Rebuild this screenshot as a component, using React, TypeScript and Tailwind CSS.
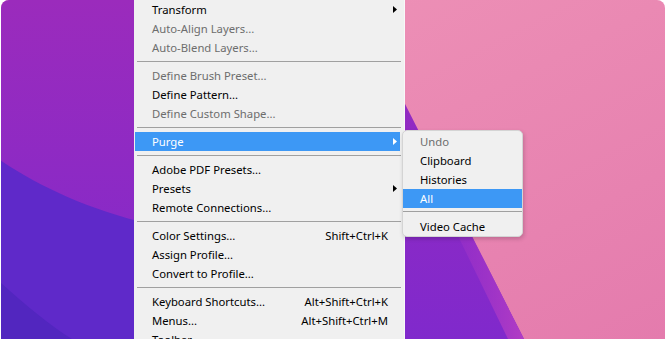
import React from 'react';

type Item =
  | { sep: true }
  | { label: string; disabled?: boolean; shortcut?: string; sub?: boolean; active?: boolean };

const mainItems: Item[] = [
  { label: 'Transform', sub: true },
  { label: 'Auto-Align Layers...', disabled: true },
  { label: 'Auto-Blend Layers...', disabled: true },
  { sep: true },
  { label: 'Define Brush Preset...', disabled: true },
  { label: 'Define Pattern...' },
  { label: 'Define Custom Shape...', disabled: true },
  { sep: true },
  { label: 'Purge', sub: true, active: true },
  { sep: true },
  { label: 'Adobe PDF Presets...' },
  { label: 'Presets', sub: true },
  { label: 'Remote Connections...' },
  { sep: true },
  { label: 'Color Settings...', shortcut: 'Shift+Ctrl+K' },
  { label: 'Assign Profile...' },
  { label: 'Convert to Profile...' },
  { sep: true },
  { label: 'Keyboard Shortcuts...', shortcut: 'Alt+Shift+Ctrl+K' },
  { label: 'Menus...', shortcut: 'Alt+Shift+Ctrl+M' },
  { label: 'Toolbar...' },
];

const purgeItems: Item[] = [
  { label: 'Undo', disabled: true },
  { label: 'Clipboard' },
  { label: 'Histories' },
  { label: 'All', active: true },
  { sep: true },
  { label: 'Video Cache' },
];

function Arrow({ white }: { white?: boolean }) {
  return (
    <svg width="4" height="7" viewBox="0 0 4 7" className="absolute right-[3px] top-[6px]">
      <polygon points="0,0 4,3.5 0,7" fill={white ? '#ffffff' : '#000000'} />
    </svg>
  );
}

function Row({ item }: { item: Exclude<Item, { sep: true }> }) {
  const color = item.active ? 'text-white' : item.disabled ? 'text-[#6d6d6d]' : 'text-black';
  return (
    <div
      className={`relative h-[19px] flex items-center justify-between pl-[17px] pr-[12px] ${color} ${
        item.active ? 'bg-[#3d98f5]' : ''
      }`}
    >
      <span>{item.label}</span>
      {item.shortcut && <span>{item.shortcut}</span>}
      {item.sub && <Arrow white={item.active} />}
    </div>
  );
}

function Wallpaper() {
  return (
    <svg width="667" height="339" viewBox="0 0 667 339" className="absolute inset-0">
      <defs>
        <clipPath id="screen">
          <rect x="1" y="0" width="664" height="360" rx="8" />
        </clipPath>
        <linearGradient id="pink" x1="0" y1="0" x2="1" y2="1">
          <stop offset="0" stopColor="#f097b9" />
          <stop offset="1" stopColor="#e47bad" />
        </linearGradient>
        <linearGradient id="violet" x1="0" y1="0" x2="0" y2="1">
          <stop offset="0" stopColor="#9b2bbc" />
          <stop offset="1" stopColor="#8029cc" />
        </linearGradient>
        <linearGradient id="band" x1="0" y1="0" x2="1" y2="0">
          <stop offset="0" stopColor="#8a2acb" stopOpacity="0" />
          <stop offset="1" stopColor="#b23cc4" />
        </linearGradient>
      </defs>
      <rect width="667" height="339" fill="#ffffff" />
      <g clipPath="url(#screen)">
        <rect width="667" height="339" fill="url(#pink)" />
        <path d="M0 0 H396 L403 100 L524 339 H0 Z" fill="url(#violet)" />
        <path d="M403 100 L524 339 H508 L398 112 Z" fill="url(#band)" />
        <path d="M0 160 C40 187 90 210 150 224 L150 339 H0 Z" fill="#5f29c9" />
        <path d="M0 282 C25 305 50 325 72 339 H0 Z" fill="#5226bf" />
      </g>
    </svg>
  );
}

export default function App() {
  return (
    <div
      className="relative w-[667px] h-[339px] overflow-hidden text-[11.3px] leading-none"
      style={{ fontFamily: '"Noto Sans", "Open Sans", sans-serif' }}
    >
      <Wallpaper />

      {/* main Edit menu */}
      <div className="absolute left-[134px] top-0 w-[271px] h-[360px] bg-[#f0f0f0] pl-[1px] pr-[4px] border-r border-[#f8f8f8]">
        {mainItems.map((it, i) =>
          'sep' in it ? (
            <div key={i} className="h-[9px] pt-[4px] ml-[2px] mr-[-1px]">
              <div className="h-px bg-[#a0a0a0]" />
            </div>
          ) : (
            <Row key={i} item={it} />
          )
        )}
      </div>

      {/* Purge submenu */}
      <div className="absolute left-[402px] top-[130px] w-[121px] bg-[#f0f0f0] border border-[#d4d4d4] rounded-[5px] pt-px overflow-hidden shadow-[1px_2px_4px_rgba(0,0,0,0.18)]">
        {purgeItems.map((it, i) =>
          'sep' in it ? (
            <div key={i} className="h-[9px] pt-[3px]">
              <div className="h-px bg-[#a0a0a0]" />
            </div>
          ) : (
            <Row key={i} item={it} />
          )
        )}
      </div>
    </div>
  );
}
